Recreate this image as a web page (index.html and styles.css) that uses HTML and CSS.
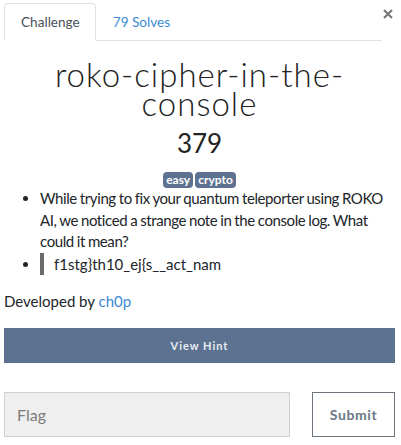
FILE: index.html
```html
<!DOCTYPE html>
<html>
<head>
<meta charset="utf-8">
<link rel="stylesheet" href="styles.css">
</head>
<body>
<div class="modal">
  <div class="tab-row">
    <ul class="tabs">
      <li class="tab active">Challenge</li>
      <li class="tab"><a href="#">79 Solves</a></li>
    </ul>
    <button class="close" aria-label="Close">
      <svg width="10" height="10" viewBox="0 0 10 10"><path d="M1 1L9 9M9 1L1 9" stroke="#7a7a7a" stroke-width="2.2" stroke-linecap="butt"/></svg>
    </button>
  </div>
  <h2 class="title">roko-cipher-in-the-console</h2>
  <h3 class="value">379</h3>
  <div class="tags">
    <span class="badge">easy</span>
    <span class="badge">crypto</span>
  </div>
  <ul class="desc">
    <li>While trying to fix your quantum teleporter using ROKO AI, we noticed a strange note in the console log. What could it mean?</li>
    <li><span class="quote">f1stg}th10_ej{s__act_nam</span></li>
  </ul>
  <p class="author">Developed by <a href="#">ch0p</a></p>
  <button class="hint">View Hint</button>
  <div class="submit-row">
    <input class="flag" type="text" placeholder="Flag">
    <button class="submit">Submit</button>
  </div>
</div>
</body>
</html>
```

FILE: styles.css
```css
html, body {
  margin: 0;
  padding: 0;
  background: #fff;
}
body {
  font-family: Lato, "Noto Sans", sans-serif;
  font-size: 16px;
  color: #212529;
}
.modal {
  padding: 3px 6px 0 4px;
}
.tab-row {
  display: flex;
  align-items: flex-start;
}
.tabs {
  flex: 1;
  display: flex;
  list-style: none;
  margin: 0;
  padding: 0;
  border-bottom: 1px solid #dee2e6;
}
.tab {
  font-size: 13.6px;
  line-height: 24px;
  padding: 6px 15px 6px 16px;
  border: 1px solid transparent;
  border-radius: 4px 4px 0 0;
  margin-bottom: -1px;
  color: #495057;
}
.tab.active {
  border-color: #dee2e6 #dee2e6 #fff;
  background: #fff;
}
.tab a {
  color: #3b8bd4;
  text-decoration: none;
}
.close {
  width: 13px;
  height: 20px;
  padding: 6px 0 0 1px;
  margin: 0;
  border: 0;
  background: none;
  display: flex;
  align-items: flex-start;
}
.title {
  margin: 19px 0 0;
  text-align: center;
  font-weight: 300;
  font-size: 33px;
  line-height: 29px;
  letter-spacing: 1px;
  color: #222;
}
.value {
  margin: 10px 0 0;
  text-align: center;
  font-weight: 400;
  font-size: 26px;
  line-height: 30px;
  color: #222;
}
.tags {
  margin-top: 14px;
  display: flex;
  justify-content: center;
  gap: 2px;
}
.badge {
  background: #5c7290;
  color: #fff;
  font-size: 12px;
  font-weight: 700;
  line-height: 12px;
  padding: 2px 3px 2px;
  border-radius: 4px;
}
.desc {
  margin: 0;
  padding-left: 36px;
  font-size: 15px;
  letter-spacing: -0.4px;
  word-spacing: -0.5px;
  line-height: 21.5px;
}
.quote {
  display: inline-block;
  border-left: 4px solid #6b6b6b;
  padding-left: 10px;
  line-height: 22px;
  letter-spacing: 0;
}
.author {
  margin: 14px 0 0;
  font-size: 15px;
  line-height: 24px;
}
.author a {
  color: #3b8bd4;
  text-decoration: none;
}
.hint {
  display: block;
  width: 100%;
  margin-top: 15px;
  height: 35px;
  border: 0;
  background: #5c7290;
  color: #e9edf2;
  font-family: Lato, sans-serif;
  font-size: 11px;
  font-weight: 700;
  letter-spacing: 1px;
}
.submit-row {
  margin-top: 29px;
  display: flex;
  gap: 22px;
}
.flag {
  flex: 1;
  min-width: 0;
  height: 45px;
  box-sizing: border-box;
  border: 1px solid #ccd0d5;
  background: #efefef;
  padding: 0 12px;
  font-family: Lato, sans-serif;
  font-size: 16px;
  color: #333;
}
.flag::placeholder {
  color: #7b7b7b;
}
.submit {
  width: 83px;
  height: 45px;
  box-sizing: border-box;
  border: 1.5px solid #6c757d;
  background: #fff;
  color: #6c7788;
  font-family: Lato, sans-serif;
  font-size: 14px;
  font-weight: 700;
  letter-spacing: 0.6px;
}
```
